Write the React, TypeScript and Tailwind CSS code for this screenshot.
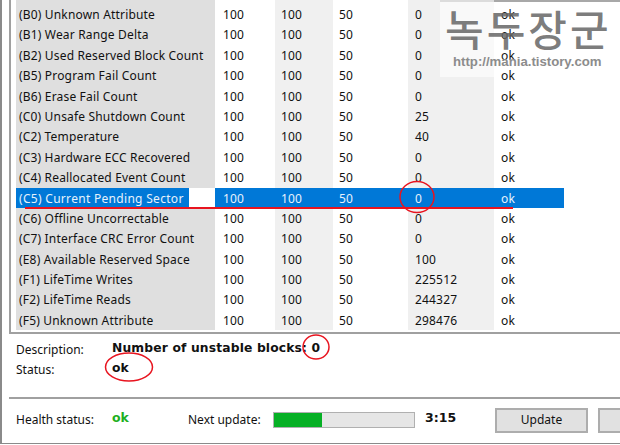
const ROWS = [
  ["(B0) Unknown Attribute", "0"],
  ["(B1) Wear Range Delta", "0"],
  ["(B2) Used Reserved Block Count", "0"],
  ["(B5) Program Fail Count", "0"],
  ["(B6) Erase Fail Count", "0"],
  ["(C0) Unsafe Shutdown Count", "25"],
  ["(C2) Temperature", "40"],
  ["(C3) Hardware ECC Recovered", "0"],
  ["(C4) Reallocated Event Count", "0"],
  ["(C5) Current Pending Sector", "0"],
  ["(C6) Offline Uncorrectable", "0"],
  ["(C7) Interface CRC Error Count", "0"],
  ["(E8) Available Reserved Space", "100"],
  ["(F1) LifeTime Writes", "225512"],
  ["(F2) LifeTime Reads", "244327"],
  ["(F5) Unknown Attribute", "298476"],
];

const SELECTED = "(C5) Current Pending Sector";

function Row({ name, raw, first }: { name: string; raw: string; first: boolean }) {
  const selected = name === SELECTED;
  const cell = selected ? "bg-[#0078d7] text-[#e6f2fc]" : "";
  const gray = selected ? "bg-[#0078d7] text-[#e6f2fc]" : "bg-[#f0f0f0]";
  return (
    <div className={first ? "flex h-[24.4px] leading-[30px] tracking-[0.17px]" : "flex h-[20.4px] leading-[22px] tracking-[0.17px]"}>
      <div className={selected ? "w-[199px] h-full bg-white" : "w-[199px] h-full bg-[#dfdfdf]"}>
        <div className={selected ? "w-[173px] h-full pl-[3px] bg-[#0078d7] text-[#e6f2fc] tracking-[0.3px]" : "h-full pl-[3px]"}>{name}</div>
      </div>
      <div className={`w-[60px] h-full pl-[8px] ${cell}`}>100</div>
      <div className={`w-[58px] h-full pl-[6px] ${gray}`}>100</div>
      <div className={`w-[75px] h-full pl-[6px] ${cell}`}>50</div>
      <div className={`w-[86px] h-full pl-[7px] ${gray}`}>{raw}</div>
      <div className={`w-[70px] h-full pl-[7px] ${cell}`}>ok</div>
    </div>
  );
}

export default function App() {
  return (
    <div className="relative w-[620px] h-[445px] overflow-hidden bg-white text-[12px] text-[#111] font-['Noto_Sans','Liberation_Sans',sans-serif]">
      <div className="h-[444px] border-b border-b-[#8a8a8a] border-l-2 border-l-[#8a8a8a] pl-[7px]">
        <div className="h-[334px] border-l-2 border-b-2 border-[#a0a0a0] pl-[5px]">
          {ROWS.map(([name, raw], i) => (
            <Row key={name} name={name} raw={raw} first={i === 0} />
          ))}
        </div>

        <div className="grid grid-cols-[96px_auto] ml-[7px] mt-[5px] h-[52px] content-start">
          <div className="pt-[2px] leading-[18px]">Description:</div>
          <div className="font-['DejaVu_Sans',sans-serif] font-bold text-[12.3px] leading-[18px] tracking-[0.15px]">
            Number of unstable blocks: 0
          </div>
          <div className="pt-[2px] leading-[18px]">Status:</div>
          <div className="font-['DejaVu_Sans',sans-serif] font-bold text-[12.3px] leading-[18px]">ok</div>
        </div>

        <div className="h-[2px] bg-[#a0a0a0] mt-[6px]" />

        <div className="flex items-center h-[42px] ml-[7px]">
          <div className="w-[96px] shrink-0">Health status:</div>
          <div className="w-[76px] shrink-0 font-['DejaVu_Sans',sans-serif] font-bold text-[12.5px] text-[#1fb01f] -mt-[3px]">ok</div>
          <div className="w-[85px] shrink-0">Next update:</div>
          <div className="w-[142px] shrink-0 h-[16px] border border-[#b0b0b0] bg-[#e6e6e6]">
            <div className="w-[48px] h-full bg-[#06b025]" />
          </div>
          <div className="w-[80px] shrink-0 pl-[10px] font-['DejaVu_Sans',sans-serif] font-bold text-[12.5px] -mt-[3px]">3:15</div>
          <button className="w-[93px] h-[25px] border-2 border-[#adadad] bg-[#e1e1e1] text-[12px] shrink-0">Update</button>
          <button className="ml-[10px] w-[40px] h-[25px] border-2 border-[#adadad] bg-[#e1e1e1] shrink-0" />
        </div>
      </div>

      {/* watermark */}
      <div className="absolute left-[440px] top-0 w-[180px] h-[2px] bg-[#a8a8a8]" />
      <div className="absolute left-[440px] top-0 w-[54px] h-[77px] bg-white/60" />
      <div className="absolute left-[445px] top-0 font-['Noto_Sans_CJK_KR',sans-serif] font-medium text-[42px] leading-[56px] text-[#666666]/85 whitespace-nowrap tracking-[3px]">
        녹두장군
      </div>
      <div className="absolute left-[453px] top-[53px] font-['Liberation_Sans',sans-serif] font-bold text-[13.2px] leading-[18px] text-[#8c8c8c] whitespace-nowrap">
        http://mania.tistory.com
      </div>

      {/* hand-drawn annotations */}
      <svg className="absolute inset-0 pointer-events-none" width="620" height="445" fill="none" stroke="#e8141f" strokeWidth="1.5">
        <path d="M25 208 H513" strokeWidth="2" />
        <ellipse cx="417" cy="197" rx="17" ry="15.5" />
        <ellipse cx="316" cy="347" rx="13" ry="12" />
        <ellipse cx="129" cy="367" rx="23.5" ry="14" />
      </svg>
    </div>
  );
}
